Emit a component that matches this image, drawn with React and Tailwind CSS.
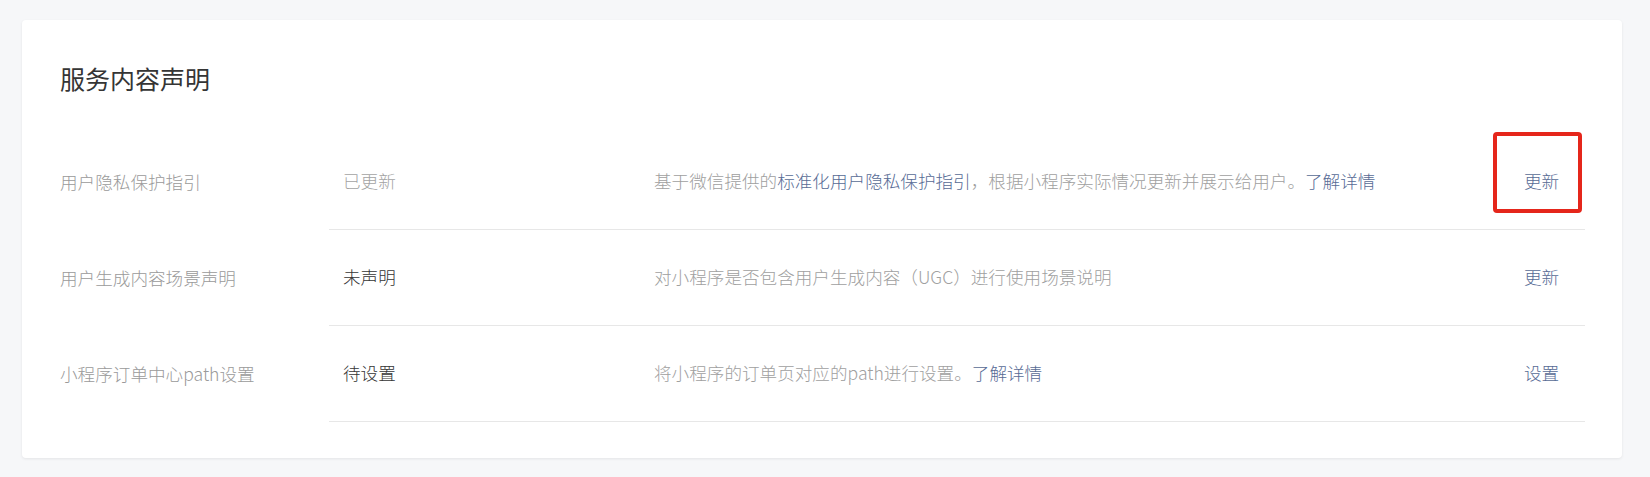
import React from 'react';

const rows = [
  {
    name: '用户隐私保护指引',
    status: '已更新',
    done: true,
    desc: [
      { t: '基于微信提供的' },
      { t: '标准化用户隐私保护指引', link: true },
      { t: '，根据小程序实际情况更新并展示给用户。' },
      { t: '了解详情', link: true },
    ],
    action: '更新',
    marked: true,
  },
  {
    name: '用户生成内容场景声明',
    status: '未声明',
    desc: [{ t: '对小程序是否包含用户生成内容（UGC）进行使用场景说明' }],
    action: '更新',
  },
  {
    name: '小程序订单中心path设置',
    status: '待设置',
    desc: [{ t: '将小程序的订单页对应的path进行设置。' }, { t: '了解详情', link: true }],
    action: '设置',
  },
];

export default function App() {
  return (
    <div className="min-h-[477px] bg-[#f6f7f9] pt-[20px] font-light font-['Noto_Sans_CJK_SC','Noto_Sans',sans-serif]">
      <div className="ml-[22px] w-[1600px] h-[438px] bg-white rounded-[4px] shadow-[0_1px_3px_rgba(0,0,0,0.08)] pl-[38px] pr-[37px] pt-[41px]">
        <h2 className="text-[25px] leading-[34px] font-normal text-[#353535]">服务内容声明</h2>
        <div className="mt-[39px]">
          {rows.map((r) => (
            <div key={r.name} className="flex h-[96px] items-center text-[17.6px]">
              <div className="w-[269px] text-[#9a9a9a]">{r.name}</div>
              <div className="flex flex-1 h-full items-center border-b border-[#e7e7e7]">
                <div className={`w-[311px] pl-[14px] ${r.done ? 'text-[#a3a3a3]' : 'text-[#353535]'}`}>{r.status}</div>
                <div className="flex-1 pl-[14px] text-[#a0a0a0]">
                  {r.desc.map((d, i) => (
                    <span key={i} className={d.link ? 'text-[#576b95]' : ''}>{d.t}</span>
                  ))}
                </div>
                <div className="relative w-[75px] h-full flex items-center pl-[14px] text-[#576b95]">
                  {r.action}
                  {r.marked && (
                    <div className="absolute left-[-17px] top-[-2px] w-[89px] h-[81px] border-[4px] border-[#e5261b] rounded-[4px]" />
                  )}
                </div>
              </div>
            </div>
          ))}
        </div>
      </div>
    </div>
  );
}
